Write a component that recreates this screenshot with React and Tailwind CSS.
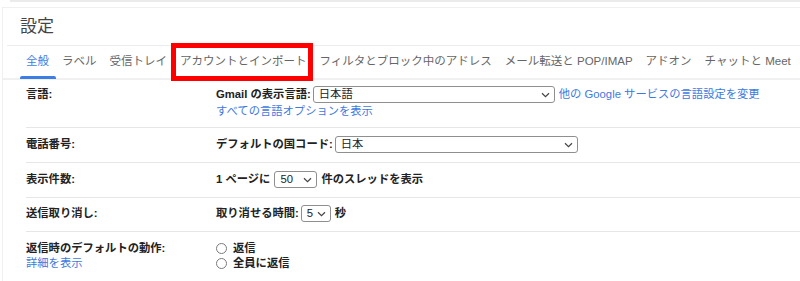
import React from "react";

function Chevron() {
  return (
    <svg width="9" height="6" viewBox="0 0 9 6" className="shrink-0">
      <path d="M1 1.2l3.5 3.4 3.5-3.4" fill="none" stroke="#444" strokeWidth="1.2" />
    </svg>
  );
}

function Sel({ className, value }) {
  return (
    <div className={"h-[17px] flex items-center justify-between border border-[#8f8f8f] rounded-[3px] pl-[5px] pr-[4px] font-normal text-[#222] bg-white " + className}>
      <span>{value}</span>
      <Chevron />
    </div>
  );
}

function Radio({ label }) {
  return (
    <div className="h-[15px] flex items-center">
      <div className="w-[11px] h-[11px] rounded-full border border-[#7a7a7a] bg-white mr-[6px]" />
      <span className="font-semibold">{label}</span>
    </div>
  );
}

export default function App() {
  const tabs = [
    "全般",
    "ラベル",
    "受信トレイ",
    "アカウントとインポート",
    "フィルタとブロック中のアドレス",
    "メール転送と POP/IMAP",
    "アドオン",
    "チャットと Meet",
  ];
  return (
    <div className="w-[800px] h-[281px] overflow-hidden bg-white font-['Liberation_Sans','Noto_Sans_CJK_JP',sans-serif] text-[#222]">
      <div className="h-[2px] ml-[10px] bg-[#ebebeb]" />
      <div className="mt-[5px] ml-[2px] h-[274px] border-t border-l border-[#f0f0f0]">
        <div className="h-[37px] pl-[17px] flex items-center text-[17px] text-[#444]">設定</div>
        <div className="ml-[4px] h-px bg-[#ededed]" />
        <div className="flex h-[34px] pl-[16.5px] border-b-2 border-[#f0f0f0] text-[11.5px] text-[#666]">
          {tabs.map((t, i) => (
            <div key={t} className="relative h-full flex items-center px-[6.5px] whitespace-nowrap">
              <span className={i === 0 ? "text-[#3d7de6]" : ""}>{t}</span>
              {i === 0 && <div className="absolute left-0 right-0 bottom-[-1px] h-[3px] bg-[#3d7de6] rounded-t-[2px]" />}
              {i === 3 && <div className="absolute left-[-3px] right-0 top-[-3px] bottom-[-3px] border-[5px] border-[#ff0000]" />}
            </div>
          ))}
        </div>
        <div className="ml-[23px] text-[11.3px]">
          <div className="flex pt-[6px] pb-[8px] border-b border-[#e6e6e6]">
            <div className="w-[190px] h-[17px] flex items-center font-semibold">言語:</div>
            <div>
              <div className="h-[17px] flex items-center whitespace-nowrap">
                <span className="font-semibold mr-[2px]">Gmail の表示言語:</span>
                <Sel className="w-[242px]" value="日本語" />
                <span className="ml-[4px] text-[#3d79e0]">他の Google サービスの言語設定を変更</span>
              </div>
              <div className="h-[16px] flex items-center text-[#3d79e0]">すべての言語オプションを表示</div>
            </div>
          </div>
          <div className="flex pt-[8px] pb-[9px] border-b border-[#e6e6e6]">
            <div className="w-[190px] h-[17px] flex items-center font-semibold">電話番号:</div>
            <div className="h-[17px] flex items-center whitespace-nowrap">
              <span className="font-semibold mr-[2px]">デフォルトの国コード:</span>
              <Sel className="w-[243px]" value="日本" />
            </div>
          </div>
          <div className="flex pt-[8px] pb-[9px] border-b border-[#e6e6e6]">
            <div className="w-[190px] h-[17px] flex items-center font-semibold">表示件数:</div>
            <div className="h-[17px] flex items-center whitespace-nowrap font-semibold">
              <span className="mr-[4px]">1 ページに</span>
              <Sel className="w-[43px]" value="50" />
              <span className="ml-[4px]">件のスレッドを表示</span>
            </div>
          </div>
          <div className="flex pt-[7px] pb-[9px] border-b border-[#e6e6e6]">
            <div className="w-[190px] h-[17px] flex items-center font-semibold">送信取り消し:</div>
            <div className="h-[17px] flex items-center whitespace-nowrap font-semibold">
              <span className="mr-[2px]">取り消せる時間:</span>
              <Sel className="w-[30px]" value="5" />
              <span className="ml-[4px]">秒</span>
            </div>
          </div>
          <div className="flex pt-[9px]">
            <div className="w-[190px]">
              <div className="h-[15px] flex items-center font-semibold">返信時のデフォルトの動作:</div>
              <div className="h-[15px] flex items-center text-[#3d79e0]">詳細を表示</div>
            </div>
            <div>
              <Radio label="返信" />
              <Radio label="全員に返信" />
            </div>
          </div>
        </div>
      </div>
    </div>
  );
}
